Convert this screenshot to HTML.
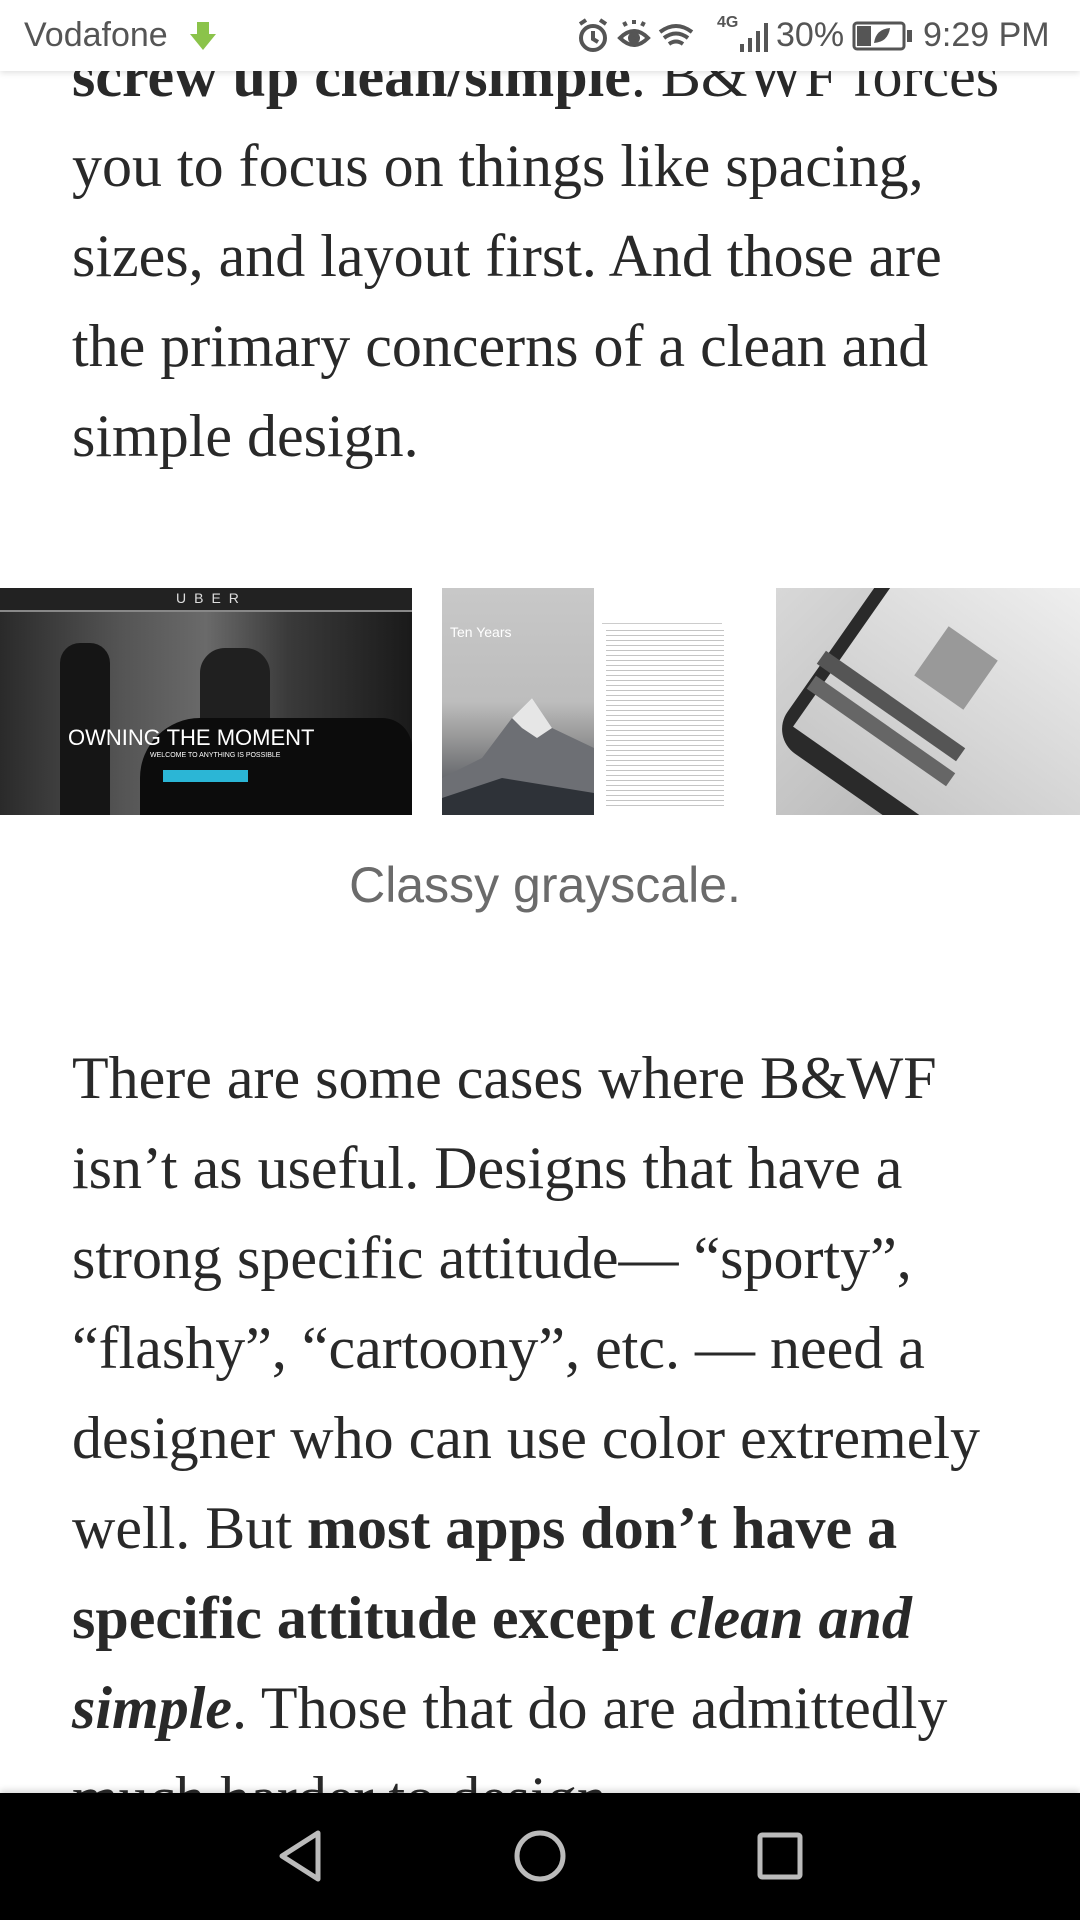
<!DOCTYPE html>
<html><head><meta charset="utf-8"><style>
html,body{margin:0;padding:0;width:1080px;height:1920px;overflow:hidden;background:#fff;position:relative}
.l{position:absolute;left:72px;white-space:nowrap;font-family:"Liberation Serif",serif;font-size:60px;color:#292929;line-height:90px;height:90px}
b{font-weight:bold}
.sb{position:absolute;left:0;top:0;width:1080px;height:71px;background:#fff;font-family:"Liberation Sans",sans-serif;font-size:34px;color:#555;box-shadow:0 2px 6px rgba(0,0,0,.12);z-index:2}
.nav{position:absolute;left:0;top:1793px;width:1080px;height:127px;background:#000;z-index:2;box-shadow:0 -3px 6px rgba(0,0,0,.15)}
.cap{position:absolute;top:856px;left:0;width:1090px;text-align:center;font-family:"Liberation Sans",sans-serif;font-size:50px;color:#6b6b6b}
</style></head><body>
<div class="sb">
<span style="position:absolute;left:24px;top:16px">Vodafone</span>
<svg style="position:absolute;left:190px;top:22px" width="26" height="28"><path d="M7 0h12v12h7L13 28 0 12h7z" fill="#8bc34a"/></svg>
<svg style="position:absolute;left:576px;top:18px" width="120" height="36" fill="none" stroke="#555" stroke-width="4">
<circle cx="17" cy="20" r="12"/><path d="M17 13v8l5 3M4 6l6-4M30 6l-6-4"/>
<path d="M44 20q14-14 28 0q-14 14-28 0z"/><circle cx="58" cy="20" r="4" fill="#555"/><path d="M50 8l-2-4M58 6V2M66 8l2-4"/>
<path d="M84 14q16-12 32 0M88 20q12-9 24 0M93 26q7-5 14 0" /></svg>
<span style="position:absolute;left:717px;top:14px;font-size:16px;font-weight:bold">4G</span>
<svg style="position:absolute;left:738px;top:20px" width="36" height="32" fill="#555"><rect x="2" y="24" width="4" height="8"/><rect x="10" y="18" width="4" height="14"/><rect x="18" y="11" width="4" height="21"/><rect x="26" y="3" width="4" height="29"/></svg>
<span style="position:absolute;left:776px;top:16px">30%</span>
<svg style="position:absolute;left:852px;top:21px" width="62" height="30"><rect x="2" y="2" width="50" height="26" rx="3" fill="none" stroke="#555" stroke-width="3"/><rect x="5" y="5" width="14" height="20" fill="#555"/><path d="M22 22q2-14 16-15q-2 14-16 15z" fill="#555"/><rect x="55" y="9" width="5" height="12" fill="#555"/></svg>
<span style="position:absolute;left:923px;top:16px">9:29 PM</span>
</div>

<div class="l" style="top:31px"><b>screw up clean/simple</b>. B&amp;WF forces</div>
<div class="l" style="top:121px">you to focus on things like spacing,</div>
<div class="l" style="top:211px">sizes, and layout first. And those are</div>
<div class="l" style="top:301px">the primary concerns of a clean and</div>
<div class="l" style="top:391px">simple design.</div>

<div style="position:absolute;left:0;top:588px;width:412px;height:227px;background:linear-gradient(90deg,#2a2a2a 0%,#555 30%,#6a6a6a 50%,#3a3a3a 70%,#1a1a1a 100%);overflow:hidden">
<div style="position:absolute;left:0;top:0;width:412px;height:22px;background:#222;border-bottom:2px solid #888"></div>
<div style="position:absolute;left:176px;top:2px;color:#ddd;font:14px 'Liberation Sans',sans-serif;letter-spacing:8px">UBER</div>
<div style="position:absolute;left:60px;top:55px;width:50px;height:172px;background:#151515;border-radius:20px 20px 0 0"></div>
<div style="position:absolute;left:200px;top:60px;width:70px;height:167px;background:#202020;border-radius:25px 25px 0 0"></div>
<div style="position:absolute;left:140px;top:130px;width:272px;height:97px;background:#0c0c0c;border-radius:60px 30px 0 0"></div>
<div style="position:absolute;left:68px;top:137px;color:#fff;font:22px 'Liberation Sans',sans-serif">OWNING THE MOMENT</div>
<div style="position:absolute;left:150px;top:164px;color:#fff;font:7px 'Liberation Sans',sans-serif">WELCOME TO ANYTHING IS POSSIBLE</div>
<div style="position:absolute;left:163px;top:182px;width:85px;height:12px;background:#2bb6d6"></div>
</div>
<div style="position:absolute;left:442px;top:588px;width:152px;height:227px;background:linear-gradient(180deg,#c8c8c8 0%,#bdbdbd 50%,#9a9a9a 65%,#3c4048 100%);overflow:hidden">
<div style="position:absolute;left:8px;top:36px;color:#fff;font:14px 'Liberation Sans',sans-serif">Ten Years</div>
<svg style="position:absolute;left:0;top:110px" width="152" height="117"><path d="M0 80 L40 60 L70 20 L90 0 L110 30 L152 50 V117 H0z" fill="#6d6f74"/><path d="M70 20 L90 0 L110 30 L95 40 L80 30z" fill="#e6e6e6"/><path d="M0 100 L60 80 L152 95 V117 H0z" fill="#2e3238"/></svg>
</div>
<div style="position:absolute;left:594px;top:588px;width:146px;height:227px;background:#fff">
<div style="position:absolute;left:8px;top:35px;width:120px;height:1px;background:#ccc"></div>
<div style="position:absolute;left:12px;top:42px;width:118px;height:180px;background:repeating-linear-gradient(180deg,#aaa 0 1px,#fff 1px 5px);opacity:.7"></div>
</div>
<div style="position:absolute;left:776px;top:588px;width:304px;height:227px;background:linear-gradient(135deg,#d8d8d8,#bdbdbd 60%,#999);overflow:hidden">
<div style="position:absolute;left:60px;top:-60px;width:320px;height:330px;background:#2a2a2a;transform:rotate(35deg);border-radius:30px"></div>
<div style="position:absolute;left:74px;top:-42px;width:290px;height:290px;background:linear-gradient(180deg,#f0f0f0,#c9c9c9);transform:rotate(35deg)"></div>
<div style="position:absolute;left:150px;top:50px;width:60px;height:60px;background:#999;transform:rotate(35deg)"></div>
<div style="position:absolute;left:30px;top:110px;width:170px;height:16px;background:#555;transform:rotate(35deg)"></div>
<div style="position:absolute;left:20px;top:135px;width:170px;height:16px;background:#666;transform:rotate(35deg)"></div>
</div>

<div class="cap">Classy grayscale.</div>

<div class="l" style="top:1033px">There are some cases where B&amp;WF</div>
<div class="l" style="top:1123px">isn’t as useful. Designs that have a</div>
<div class="l" style="top:1213px">strong specific attitude— “sporty”,</div>
<div class="l" style="top:1303px">“flashy”, “cartoony”, etc. — need a</div>
<div class="l" style="top:1393px">designer who can use color extremely</div>
<div class="l" style="top:1483px">well. But <b>most apps don’t have a</b></div>
<div class="l" style="top:1573px"><b>specific attitude except <i>clean and</i></b></div>
<div class="l" style="top:1663px"><b><i>simple</i></b>. Those that do are admittedly</div>
<div class="l" style="top:1753px">much harder to design.</div>

<div class="nav">
<svg width="1080" height="127" fill="none" stroke="#bbb" stroke-width="5">
<path d="M318 40 L282 63 L318 86 Z" stroke-linejoin="round"/>
<circle cx="540" cy="63" r="23"/>
<rect x="760" y="42" width="40" height="42" rx="2"/>
</svg>
</div>
</body></html>
